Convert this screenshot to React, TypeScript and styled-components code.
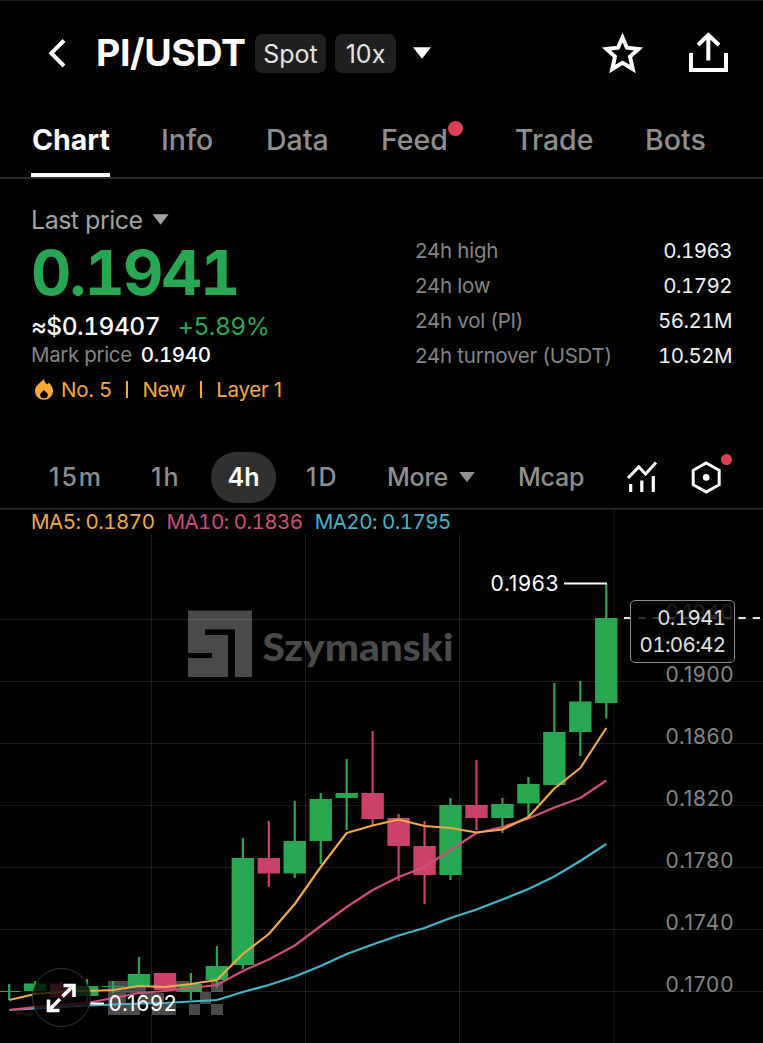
import React from "react";
import styled, { createGlobalStyle } from "styled-components";

const GREEN = "#27a74f";
const RED = "#cb4268";
const ORANGE = "#f8a833";

const GlobalStyle = createGlobalStyle`
  * { box-sizing: border-box; }
  body {
    margin: 0;
    background: #000;
    color: #fff;
    font-family: Inter, "Liberation Sans", sans-serif;
    -webkit-font-smoothing: antialiased;
  }
`;

const Screen = styled.main`
  width: 763px;
  height: 1043px;
  overflow: hidden;
  background: #000;
  border-top: 1px solid #1b1b1b;
  display: flex;
  flex-direction: column;
`;

const Header = styled.header`
  height: 104px;
  padding: 0 34px 0 46px;
  display: flex;
  align-items: center;
  flex-shrink: 0;
`;

const BackButton = styled.div`
  width: 50px;
  height: 32px;
`;

const Pair = styled.h1`
  margin: 0;
  width: 159px;
  font-size: 37.5px;
  line-height: 44px;
  font-weight: 700;
  letter-spacing: -0.4px;
  white-space: nowrap;
`;

const Badge = styled.span<{ $w: number }>`
  width: ${(p) => p.$w}px;
  height: 39px;
  margin-right: 9px;
  margin-top: 1px;
  border-radius: 7px;
  background: #1f1f1f;
  color: #e4e4e4;
  font-size: 25px;
  line-height: 40px;
  text-align: center;
`;

const Caret = styled.span<{ $size: number; $color: string }>`
  width: ${(p) => p.$size * 2}px;
  height: ${(p) => p.$size * 1.3}px;
  background: ${(p) => p.$color};
  clip-path: polygon(0 0, 100% 0, 50% 100%);
`;

const TitleCaret = styled(Caret)`
  margin-left: 8px;
`;

const HeaderActions = styled.div`
  margin-left: auto;
  padding-bottom: 1px;
  display: flex;
  gap: 45px;
  align-items: center;
`;

const Tabs = styled.nav`
  height: 74px;
  flex-shrink: 0;
  padding-left: 31px;
  border-bottom: 2px solid #2a2a2a;
  display: grid;
  grid-template-columns: 129px 105px 115px 134px 130px auto;
  justify-content: start;
`;

const Tab = styled.div<{ $active?: boolean }>`
  position: relative;
  justify-self: start;
  height: 72px;
  padding-left: 1px;
  padding-top: 17px;
  font-size: 28.5px;
  line-height: 36px;
  font-weight: ${(p) => (p.$active ? 700 : 500)};
  color: ${(p) => (p.$active ? "#fff" : "#8f8f8f")};
  border-bottom: 4px solid ${(p) => (p.$active ? "#fff" : "transparent")};
`;

const Dot = styled.i<{ $size: number; $top: number; $right: number }>`
  position: absolute;
  top: ${(p) => p.$top}px;
  right: ${(p) => p.$right}px;
  width: ${(p) => p.$size}px;
  height: ${(p) => p.$size}px;
  border-radius: 50%;
  background: #dc4055;
`;

const Summary = styled.section`
  height: 267px;
  flex-shrink: 0;
  padding: 25px 31px 0 31px;
  display: flex;
  justify-content: space-between;
`;

const PriceColumn = styled.div`
  display: flex;
  flex-direction: column;
  white-space: nowrap;
`;

const PriceLabel = styled.div`
  display: flex;
  align-items: center;
  gap: 10px;
  height: 31px;
  font-size: 25px;
  letter-spacing: -0.5px;
  color: #a3a3a3;
`;

const BigPrice = styled.div`
  height: 71px;
  line-height: 74px;
  font-size: 62.5px;
  font-weight: 700;
  color: ${GREEN};
  font-feature-settings: "tnum";
  letter-spacing: -1.9px;
`;

const FiatRow = styled.div`
  display: flex;
  gap: 18px;
  height: 34px;
  line-height: 40px;
  font-size: 24.5px;
  font-weight: 500;
  letter-spacing: -0.5px;
  font-feature-settings: "tnum";
`;

const Change = styled.span`
  color: ${GREEN};
  font-weight: 400;
`;

const MarkRow = styled.div`
  display: flex;
  gap: 9px;
  height: 29px;
  line-height: 29px;
  font-size: 20.5px;
  letter-spacing: -0.35px;
  color: #858585;
`;

const MarkValue = styled.span`
  color: #fff;
  font-weight: 500;
  font-feature-settings: "tnum";
`;

const TagRow = styled.div`
  display: flex;
  align-items: center;
  height: 41px;
  padding-left: 4px;
  font-size: 20.5px;
  letter-spacing: -0.3px;
  color: ${ORANGE};
`;

const TagText = styled.span`
  margin-left: 8px;
  white-space: pre;
`;

const TagDivider = styled.i`
  width: 2px;
  height: 17px;
  margin: 0 6px 0 15px;
  background: ${ORANGE};
`;

const Stats = styled.dl`
  margin: 28px 0 0;
  width: 317px;
  font-size: 20.5px;
`;

const StatRow = styled.div`
  display: flex;
  justify-content: space-between;
  height: 35px;
  line-height: 38px;
`;

const StatLabel = styled.dt`
  color: #858585;
  letter-spacing: -0.25px;
`;

const StatValue = styled.dd`
  margin: 0;
  color: #f0f0f0;
  font-feature-settings: "tnum";
  letter-spacing: -0.55px;
`;

const Intervals = styled.div`
  height: 62px;
  flex-shrink: 0;
  padding: 0 0 0 49px;
  display: grid;
  grid-template-columns: 102px 60px 95px 81px 131px 108px 63px 52px;
  align-items: center;
  font-size: 25px;
  font-weight: 500;
  color: #8f8f8f;
`;

const Interval = styled.span<{ $ls?: number }>`
  display: flex;
  align-items: center;
  gap: 11px;
  letter-spacing: ${(p) => p.$ls ?? 0}px;
`;

const ActiveInterval = styled.span`
  width: 65px;
  height: 51px;
  border-radius: 25px;
  background: #303030;
  color: #fff;
  line-height: 51px;
  text-align: center;
  font-weight: 600;
`;

const IconBox = styled.span`
  position: relative;
  height: 36px;
`;

const ChartArea = styled.section`
  position: relative;
  flex: 1;
`;

const Legend = styled.div`
  position: absolute;
  top: 2px;
  left: 31px;
  display: flex;
  gap: 12px;
  font-size: 20.5px;
  line-height: 24px;
  letter-spacing: -0.5px;
  white-space: nowrap;
`;

const LegendItem = styled.span<{ $color: string }>`
  color: ${(p) => p.$color};
  font-feature-settings: "tnum";
`;

const PriceTag = styled.div`
  position: absolute;
  top: 92px;
  left: 630px;
  width: 105px;
  height: 63px;
  padding: 3px 8.5px 0 0;
  border: 1.5px solid #909090;
  border-radius: 5px;
  background: rgba(0, 0, 0, 0.78);
  color: #e2e2e2;
  text-align: right;
  font-size: 20.5px;
  line-height: 27px;
  font-feature-settings: "tnum";
  letter-spacing: -0.6px;
`;

const ExpandButton = styled.div`
  position: absolute;
  left: 32px;
  top: 460px;
  width: 59px;
  height: 59px;
  border: 1px solid #383838;
  border-radius: 50%;
  background: rgba(0, 0, 0, 0.76);
`;

type Candle = [up: boolean, open: number, close: number, high: number, low: number];

const CANDLES: Candle[] = [
  [true, 991, 992, 984, 1000],
  [true, 983.5, 991, 981, 993],
  [false, 983.5, 997.5, 981, 1000],
  [true, 986, 996, 979, 1003],
  [true, 986, 987, 981, 993],
  [true, 974, 987, 957, 987],
  [false, 973, 990, 973, 990],
  [true, 984, 992, 973, 1000],
  [true, 966, 980, 946, 988],
  [true, 858, 965, 838, 969],
  [false, 858, 873.5, 821, 887],
  [true, 841, 873.5, 801, 878],
  [true, 799, 841, 793, 864],
  [true, 793, 798, 759, 830],
  [false, 793, 819, 731, 826],
  [false, 818, 846, 814, 881],
  [false, 846, 875, 821, 904],
  [true, 805, 875, 798, 880],
  [false, 805, 818, 760, 830],
  [true, 804, 818, 798, 833],
  [true, 784, 803.5, 777, 818],
  [true, 732, 785, 683, 785],
  [true, 701.5, 732, 681, 756],
  [true, 618, 703, 584, 718.5],
];

const MA5 = [1000, 994, 992, 991, 990, 986, 987, 984, 980, 954, 934, 904, 867, 833, 825.5, 819.5, 826, 828, 832.5, 829.5, 817, 788.5, 768, 728];
const MA10 = [1010, 1007, 1005, 1003, 998, 993, 991, 988, 985, 971, 959.5, 945.5, 926, 907, 890, 877, 867, 850, 833, 827, 818.5, 807.5, 798, 780.5];
const MA20 = [1010, 1008.5, 1007, 1005.5, 1004.5, 1003.5, 1003, 1001.5, 1000, 992, 985, 976.5, 966, 954, 944.5, 935.5, 928, 918, 909.5, 899.5, 889, 876.5, 861, 844];

const xAt = (i: number) => 9.2 + i * 25.96;
const toPoints = (values: number[]) => values.map((v, i) => `${xAt(i)},${v}`).join(" ");

const AXIS = ["0.1940", "0.1900", "0.1860", "0.1820", "0.1780", "0.1740", "0.1700"];

const PIXELS: [number, number, number, number][] = [
  [108, 981, 18, 34],
  [126, 981, 20, 12],
  [126, 1004, 14, 11],
  [152, 1004, 24, 11],
  [176, 981, 13, 11],
  [189, 1004, 11, 11],
  [200, 992, 11, 12],
  [211, 981, 12, 11],
  [211, 1004, 12, 11],
  [140, 993, 24, 11],
];

const Chart = () => (
  <svg width="763" height="535" viewBox="0 508 763 535" fontFamily="Inter, sans-serif">
    <g fill="#4a4a4a">
      <path d="M188 610.5H252V677H235V629.5H205V635H228V677H188V658H212V653H188Z" />
      <text x="262.5" y="661" fontFamily="Lato, sans-serif" fontWeight="900" fontSize="38" textLength="191" lengthAdjust="spacingAndGlyphs">
        Szymanski
      </text>
      {PIXELS.map(([x, y, w, h]) => (
        <rect key={`${x}-${y}`} x={x} y={y} width={w} height={h} />
      ))}
    </g>
    <g stroke="#fff" strokeOpacity="0.11">
      {AXIS.map((label, i) => (
        <line key={label} x1="0" x2="763" y1={619.5 + i * 62} y2={619.5 + i * 62} />
      ))}
      {[151.5, 305.5, 459.5].map((x) => (
        <line key={x} x1={x} x2={x} y1="534" y2="1043" />
      ))}
      <line x1="614" x2="614" y1="509" y2="1043" />
    </g>
    <rect y="508" width="763" height="1.5" fill="#2a2a2a" />
    {CANDLES.map(([up, top, bottom, high, low], i) => (
      <g key={i} fill={up ? GREEN : RED}>
        <rect x={xAt(i) - 1.1} y={high} width="2.2" height={low - high} />
        <rect x={xAt(i) - 11.2} y={top} width="22.4" height={bottom - top} />
      </g>
    ))}
    <g fill="none" strokeWidth="2.2" strokeLinejoin="round">
      <polyline points={toPoints(MA20)} stroke="#42b5cb" />
      <polyline points={toPoints(MA10)} stroke="#d14d78" />
      <polyline points={toPoints(MA5)} stroke="#f2a945" />
    </g>
    <g fill="#858585" fontSize="21">
      {AXIS.map((label, i) => (
        <text key={label} x="665.5" y={619.5 + i * 62} textLength="68">
          {label}
        </text>
      ))}
    </g>
    <path d="M624 618H763" stroke="#e2e2e2" strokeWidth="2" strokeDasharray="7.3 7" />
    <path d="M564 583.5H607M90 1003.5H104" stroke="#fff" strokeWidth="2" />
    <g fill="#fff" fontSize="21">
      <text x="490.5" y="591" textLength="68">0.1963</text>
      <text x="108.5" y="1011" textLength="68">0.1692</text>
    </g>
  </svg>
);

const BackIcon = () => (
  <svg width="24" height="32" viewBox="46 37 24 32">
    <path d="M64 40.5L51.3 53.2L64 66" fill="none" stroke="#fff" strokeWidth="4" />
  </svg>
);

const StarIcon = () => (
  <svg width="42" height="42" viewBox="601 32 42 42">
    <path
      d="M622.5 37.5L627 47.7L638.5 49L630 56.6L632.8 69L622.5 62.8L612.2 69L615 56.6L606.5 49L618 47.7Z"
      fill="none"
      stroke="#fff"
      strokeWidth="4"
    />
  </svg>
);

const ShareIcon = () => (
  <svg width="41" height="42" viewBox="688 32 41 42">
    <path d="M691 53V70H726V53M708.3 60.5V35M698 45L708.3 35L719 45" fill="none" stroke="#fff" strokeWidth="4" />
  </svg>
);

const FlameIcon = () => (
  <svg width="18" height="21" viewBox="0 0 18 21">
    <path
      fill={ORANGE}
      fillRule="evenodd"
      d="M9 0C9.2 2.7 10.6 4.2 12.3 5.3L13.9 3.7C16.4 5.8 18 8.8 18 12C18 17 14.1 20.8 9 20.8S0 17 0 12C0 8.6 1.5 6.6 4 4.4C6 2.8 7.5 1.5 9 0ZM8.8 10.8C8.3 12.7 5.2 13.6 5.2 16A3.8 3.2 0 0 0 12.8 16C12.8 13.6 10 12.8 8.8 10.8Z"
    />
  </svg>
);

const IndicatorIcon = () => (
  <svg width="32" height="36" viewBox="626 459 32 36">
    <path d="M628 478L638.8 467L645.5 474L656 462.5" fill="none" stroke="#fff" strokeWidth="3" />
    <path d="M630.7 484V492M641.8 480.5V492M653.3 476V492" stroke="#fff" strokeWidth="3.2" />
  </svg>
);

const SettingsIcon = () => (
  <svg width="34" height="36" viewBox="689 459 34 36">
    <path d="M706.2 463L719.2 470.3V484.7L706.2 492L693.2 484.7V470.3Z" fill="none" stroke="#fff" strokeWidth="3" />
    <circle cx="706.2" cy="477.4" r="3.3" fill="#fff" />
  </svg>
);

const ExpandIcon = () => (
  <svg width="57" height="57" viewBox="33 969 57 57">
    <path d="M62.5 996.5L74 985M63.5 985.5H74V997M60 999L48.5 1010.5M48.5 999.5V1010.5H59.5" fill="none" stroke="#fff" strokeWidth="3.6" />
  </svg>
);

export default function App() {
  return (
    <Screen>
      <GlobalStyle />
      <Header>
        <BackButton><BackIcon /></BackButton>
        <Pair>PI/USDT</Pair>
        <Badge $w={71}>Spot</Badge>
        <Badge $w={61}>10x</Badge>
        <TitleCaret $size={9} $color="#fff" />
        <HeaderActions>
          <StarIcon />
          <ShareIcon />
        </HeaderActions>
      </Header>
      <Tabs>
        <Tab $active>Chart</Tab>
        <Tab>Info</Tab>
        <Tab>Data</Tab>
        <Tab>Feed<Dot $size={15} $top={16} $right={-15} /></Tab>
        <Tab>Trade</Tab>
        <Tab>Bots</Tab>
      </Tabs>
      <Summary>
        <PriceColumn>
          <PriceLabel>Last price<Caret $size={8} $color="#a3a3a3" /></PriceLabel>
          <BigPrice>0.1941</BigPrice>
          <FiatRow>≈$0.19407<Change>+5.89%</Change></FiatRow>
          <MarkRow>Mark price<MarkValue>0.1940</MarkValue></MarkRow>
          <TagRow>
            <FlameIcon />
            <TagText>No. 5</TagText><TagDivider />
            <TagText>New</TagText><TagDivider />
            <TagText>Layer 1</TagText>
          </TagRow>
        </PriceColumn>
        <Stats>
          <StatRow><StatLabel>24h high</StatLabel><StatValue>0.1963</StatValue></StatRow>
          <StatRow><StatLabel>24h low</StatLabel><StatValue>0.1792</StatValue></StatRow>
          <StatRow><StatLabel>24h vol (PI)</StatLabel><StatValue>56.21M</StatValue></StatRow>
          <StatRow><StatLabel>24h turnover (USDT)</StatLabel><StatValue>10.52M</StatValue></StatRow>
        </Stats>
      </Summary>
      <Intervals>
        <Interval $ls={2}>15m</Interval>
        <Interval $ls={2}>1h</Interval>
        <ActiveInterval>4h</ActiveInterval>
        <Interval $ls={2}>1D</Interval>
        <Interval $ls={-0.2}>More<Caret $size={8} $color="#8f8f8f" /></Interval>
        <Interval $ls={-0.2}>Mcap</Interval>
        <IconBox><IndicatorIcon /></IconBox>
        <IconBox><SettingsIcon /><Dot $size={11} $top={-5} $right={9} /></IconBox>
      </Intervals>
      <ChartArea>
        <Chart />
        <Legend>
          <LegendItem $color="#f2a945">MA5: 0.1870</LegendItem>
          <LegendItem $color="#d14d78">MA10: 0.1836</LegendItem>
          <LegendItem $color="#42b5cb">MA20: 0.1795</LegendItem>
        </Legend>
        <PriceTag>0.1941<br />01:06:42</PriceTag>
        <ExpandButton><ExpandIcon /></ExpandButton>
      </ChartArea>
    </Screen>
  );
}
